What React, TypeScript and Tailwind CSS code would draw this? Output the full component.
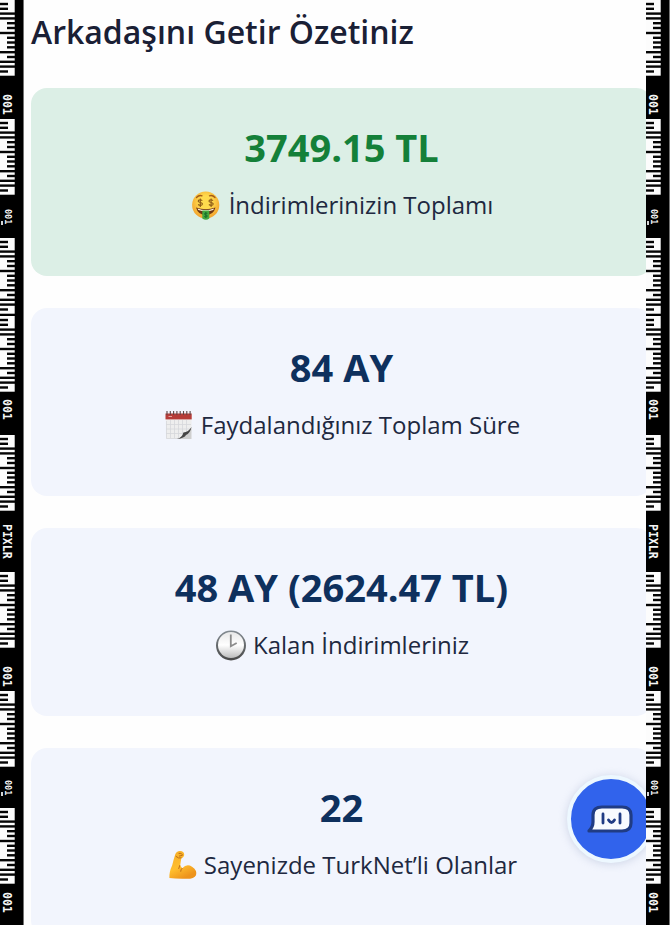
import type { ReactNode } from 'react';

// Each bar: [x, y, width] inside a 15x76 film-edge code; every bar is 2.4px thick.
const bars = [
  [0, 2.8, 8], [0, 7.6, 8], [0, 12.4, 15], [0, 17.2, 15], [7, 22, 8], [7, 26.8, 8],
  [0, 31.8, 15], [7, 36.6, 8], [7, 41.3, 8], [7, 46.1, 8], [0, 51, 15], [7, 55.8, 8],
  [0, 60.6, 15], [0, 65.4, 15], [0, 70.3, 8],
];

function Code() {
  return (
    <svg className="block h-[76px] w-[15px]" viewBox="0 0 15 76" fill="#050505">
      <rect width="14.7" height="75.7" fill="#fcfcfc" />
      {bars.map(([x, y, w]) => <rect key={y} x={x} y={y} width={w} height="2.4" />)}
    </svg>
  );
}

function Mark({ children, size = 'big', className }: { children: string; size?: 'big' | 'small'; className: string }) {
  return (
    <div className={`flex items-center justify-center ${size === 'big' ? 'w-[12px]' : 'w-[13px]'} ${className}`}>
      {size === 'small' && <span className="mt-3 h-1 w-[2px] shrink-0 bg-neutral-300" />}
      <span className={`font-['DejaVu_Sans_Mono',monospace] font-bold leading-none [writing-mode:vertical-rl] ${size === 'big' ? 'text-[11.5px]' : 'ml-px text-[8.5px]'}`}>
        {children}
      </span>
    </div>
  );
}

function Strip() {
  return (
    <div className="z-10 flex h-[925px] w-6 shrink-0 flex-col overflow-hidden border-r border-neutral-500 bg-black text-neutral-100">
      <Code />
      <Mark className="h-[43px] pt-[14px]">001</Mark>
      <Code />
      <Mark size="small" className="h-[43px]">001</Mark>
      <Code />
      <div className="h-[2px]" />
      <Code />
      <Mark className="h-[43px] pb-[8px]">001</Mark>
      <Code />
      <Mark className="h-[61px]">PIXLR</Mark>
      <Code />
      <Mark className="h-[43px] pt-[14px]">001</Mark>
      <Code />
      <Mark size="small" className="h-[41px]">001</Mark>
      <Code />
      <Mark className="h-[41px] pb-[5px]">001</Mark>
    </div>
  );
}

function MoneyFace() {
  return (
    <svg viewBox="0 0 30 30" className="ml-px size-[30px]">
      <defs>
        <radialGradient id="face" cx=".5" cy=".4" r=".6">
          <stop offset=".4" stopColor="#ffda4d" /><stop offset="1" stopColor="#f2a02c" />
        </radialGradient>
      </defs>
      <circle cx="14.7" cy="15" r="13.6" fill="url(#face)" />
      <path d="M5.5 7.5Q8 4.8 11 5.8M18.5 5.8Q21.5 4.8 24 7.5" fill="none" stroke="#a35b17" strokeWidth="1.3" strokeLinecap="round" />
      <path d="M5 17.5Q14.8 21 24.5 17.5Q22.5 25 14.8 25Q7 25 5 17.5" fill="#6d3513" />
      <path d="M6.5 18.5Q14.8 21.5 23 18.5L22.3 20Q14.8 22.5 7.3 20Z" fill="#fff4dc" />
      <g fill="none" stroke="#8b5715" strokeWidth="1.1">
        <path id="dollar" d="M11.3 10.6Q9.2 9 7.5 10.3Q6.5 12.1 9.3 12.5Q12.2 13.1 11 14.9Q9.1 16.2 7.1 14.5M9.3 8.4V17" />
        <use href="#dollar" x="10.8" />
      </g>
      <path d="M11.3 20.5H18.3V28.5Q15 31 11.3 28.5Z" fill="#43a83f" />
      <path d="M16.4 23.3Q13.4 22.5 13.4 24Q13.6 24.9 15 25Q17 25.5 15.9 26.8Q14.6 27.3 13.2 26.5M14.8 22V28" fill="none" stroke="#176e2b" />
    </svg>
  );
}

function Calendar() {
  return (
    <svg viewBox="0 0 30 32" className="ml-px -mr-px h-8 w-[30px]">
      <path d="M1.8 4H27.5V21Q22 26 17 30H2Z" fill="#eeeeee" />
      <path d="M2.5 12V29.5H17M6.5 11V29M10.5 11V29M14.5 11V29M18.5 11V27M22.5 11V24M2 15.5H27M2 20H26M2 24.5H21" stroke="#d5d7da" strokeWidth=".8" fill="none" />
      <path d="M1.5 4.5H27.7V10.4H1.5Z" fill="#b63c39" />
      <path d="M3 2V6M6.3 2V6M9.6 2V6M12.9 2V6M16.2 2V6M19.5 2V6M22.8 2V6M26.1 2V6" stroke="#5d4547" strokeWidth="1.1" />
      <path d="M27.5 18V30H13Q18 29 19.4 25Q25 23.5 27.5 18" fill="#cfcfcf" />
      <path d="M27.5 18Q24.5 23 19.4 23.6Q18.5 28.5 13 30Q20.5 29 22 26Q26 24.5 27.5 18" fill="#454545" />
      <path d="M4.5 7.5H8" stroke="#e4a29b" />
    </svg>
  );
}

function Clock() {
  return (
    <svg viewBox="0 0 32 32" className="ml-px -mr-0.5 size-8">
      <defs>
        <linearGradient id="rim" x2="0" y2="1"><stop stopColor="#848c92" /><stop offset="1" stopColor="#484848" /></linearGradient>
        <linearGradient id="dial" x2="0" y2="1"><stop stopColor="#e8e8e8" /><stop offset=".5" stopColor="#fff" /><stop offset="1" stopColor="#bcbcbc" /></linearGradient>
      </defs>
      <circle cx="16" cy="16.5" r="15" fill="url(#rim)" />
      <circle cx="16" cy="16" r="13" fill="url(#dial)" />
      <path d="M15.8 5.5V17.3L21.7 14" fill="none" stroke="#8c8c8c" strokeWidth="1.8" />
    </svg>
  );
}

function Muscle() {
  return (
    <svg viewBox="0 0 30 30" className="ml-0.5 -mr-0.5 size-[30px]">
      <defs><linearGradient id="arm" x2=".5" y2="1"><stop stopColor="#f5ad28" /><stop offset=".6" stopColor="#ffbe2e" /><stop offset="1" stopColor="#ed931c" /></linearGradient></defs>
      <path d="M7.2 4.5Q8.4 1 12 1Q16 1.2 16.2 4.4Q16.2 7.2 13.3 8.2L12.2 15.2Q13.4 17.3 14.2 18.2Q19 13.3 24 16.8Q29.4 20.3 28 25.2Q26.2 29.2 17 28.8Q8 29 1.4 28Q1 22 4.2 15.2Q5.6 9.5 7.2 4.5Z" fill="url(#arm)" />
      <path d="M8 6.5Q10.5 8.8 13.2 8M11 3.4Q14.5 3 14.3 5.4L11.4 6M11.7 15.5L10.8 18.5M14.1 18.3Q12.6 19.7 12.7 21.3" fill="none" stroke="#bd6c17" strokeWidth="1" strokeLinecap="round" />
    </svg>
  );
}

function Card({ value, label, icon, green }: { value: string; label: string; icon: ReactNode; green?: boolean }) {
  return (
    <section className={`flex h-[188px] w-[621px] flex-col items-center rounded-2xl pt-8 ${green ? 'bg-[#dcefe6]' : 'bg-[#f2f5fd]'}`}>
      <h2 className={`h-[54px] text-[38px] font-bold leading-[54px] ${green ? 'text-[#148039]' : 'text-[#0e305d]'}`}>{value}</h2>
      <div className="mt-[15px] flex h-8 items-center whitespace-nowrap text-2xl leading-8 text-[#202840]">
        <span className="mr-2 shrink-0">{icon}</span>
        <span>{label}</span>
      </div>
    </section>
  );
}

export default function App() {
  return (
    <div className="relative flex h-[925px] w-[670px] overflow-hidden bg-[#fefefe] font-['Open_Sans','Noto_Sans',sans-serif]">
      <Strip />
      <main className="h-[925px] w-[622px] shrink-0 overflow-hidden pl-[7px]">
        <h1 className="h-[88px] whitespace-nowrap pt-[8px] text-[32px] font-semibold leading-[48px] text-[#1a2035]">Arkadaşını Getir Özetiniz</h1>
        <div className="flex flex-col gap-8">
          <Card green value="3749.15 TL" label="İndirimlerinizin Toplamı" icon={<MoneyFace />} />
          <Card value="84 AY" label="Faydalandığınız Toplam Süre" icon={<Calendar />} />
          <Card value="48 AY (2624.47 TL)" label="Kalan İndirimleriniz" icon={<Clock />} />
          <Card value="22" label="Sayenizde TurkNet’li Olanlar" icon={<Muscle />} />
        </div>
      </main>
      <button aria-label="Sohbet" className="absolute left-[567px] top-[775px] flex size-[88px] items-center justify-center rounded-full border-[4px] border-[#edf8ff] bg-[#3163ec] shadow-[0_1px_9px_#9eabca70]">
        <svg viewBox="0 0 46 28" className="ml-[-3px] h-7 w-[46px]">
          <path d="M2 26Q6 22 6 17V10Q6 2 15 2H35Q44 2 44 10V18Q44 26 35 26Z" fill="#f8fbff" stroke="#203c84" strokeWidth="3.2" strokeLinejoin="round" />
          <path d="M16 9V18M33 9V18M21.5 15Q24.5 20 27.5 15" fill="none" stroke="#203c84" strokeWidth="2.8" strokeLinecap="round" />
        </svg>
      </button>
      <Strip />
    </div>
  );
}
